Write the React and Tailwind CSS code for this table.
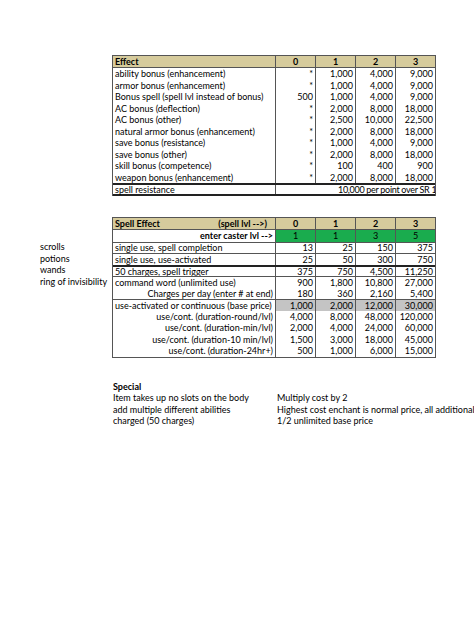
import React from "react";

// first table: magic item base prices by bonus
const effects = [
  ["ability bonus (enhancement)", "*", "1,000", "4,000", "9,000"],
  ["armor bonus (enhancement)", "*", "1,000", "4,000", "9,000"],
  ["Bonus spell (spell lvl instead of bonus)", "500", "1,000", "4,000", "9,000"],
  ["AC bonus (deflection)", "*", "2,000", "8,000", "18,000"],
  ["AC bonus (other)", "*", "2,500", "10,000", "22,500"],
  ["natural armor bonus (enhancement)", "*", "2,000", "8,000", "18,000"],
  ["save bonus (resistance)", "*", "1,000", "4,000", "9,000"],
  ["save bonus (other)", "*", "2,000", "8,000", "18,000"],
  ["skill bonus (competence)", "*", "100", "400", "900"],
  ["weapon bonus (enhancement)", "*", "2,000", "8,000", "18,000"],
];

// second table: spell effects
const spells = [
  { side: "scrolls", label: "single use, spell completion", vals: ["13", "25", "150", "375"] },
  { side: "potions", label: "single use, use-activated", vals: ["25", "50", "300", "750"] },
  { side: "wands", label: "50 charges, spell trigger", vals: ["375", "750", "4,500", "11,250"], thick: true },
  { side: "ring of invisibility", label: "command word (unlimited use)", vals: ["900", "1,800", "10,800", "27,000"] },
  { side: "", label: "Charges per day (enter # at end)", vals: ["180", "360", "2,160", "5,400"], right: true, noline: true },
  { side: "", label: "use-activated or continuous (base price)", vals: ["1,000", "2,000", "12,000", "30,000"], gray: true },
  { side: "", label: "use/cont. (duration-round/lvl)", vals: ["4,000", "8,000", "48,000", "120,000"], right: true, noline: true },
  { side: "", label: "use/cont. (duration-min/lvl)", vals: ["2,000", "4,000", "24,000", "60,000"], right: true, noline: true },
  { side: "", label: "use/cont. (duration-10 min/lvl)", vals: ["1,500", "3,000", "18,000", "45,000"], right: true, noline: true },
  { side: "", label: "use/cont. (duration-24hr+)", vals: ["500", "1,000", "6,000", "15,000"], right: true, noline: true },
];

const font = { fontFamily: "Lato, 'Liberation Sans', sans-serif" };

const Cell = ({ center, className = "", children }) => (
  <div
    className={`flex h-full w-[40px] shrink-0 items-center border-l border-[#555] px-[2px] ${center ? "justify-center" : "justify-end"} ${className}`}
  >
    {children}
  </div>
);

const App = () => {
  return (
    <div
      className="relative h-[632px] w-[474px] overflow-hidden bg-white text-[9px] leading-none text-black"
      style={font}
    >
      <div className="pt-[55px]">
        {/* Effect table */}
        <div className="ml-[112px] w-[324px] border border-b-0 border-[#555]">
          <div className="flex h-[12px] border-b border-[#555] bg-[#d6cb9c] font-bold">
            <div className="flex w-[162px] shrink-0 items-center px-[2px]">Effect</div>
            {["0", "1", "2", "3"].map((h) => (
              <Cell key={h} center>{h}</Cell>
            ))}
          </div>
          {effects.map((r) => (
            <div key={r[0]} className="flex h-[11.5px]">
              <div className="flex w-[162px] shrink-0 items-center overflow-hidden whitespace-nowrap px-[2px]">{r[0]}</div>
              {r.slice(1).map((v, i) => (
                <Cell key={i}>{v}</Cell>
              ))}
            </div>
          ))}
          <div className="flex h-[13px] border-y-2 border-[#222]">
            <div className="flex w-[162px] shrink-0 items-center px-[2px]">spell resistance</div>
            <div className="flex h-full w-[160px] shrink-0 items-center overflow-hidden whitespace-nowrap border-l border-[#555]">
              <span className="ml-[62px] tracking-[-0.3px]">10,000 per point over SR 1</span>
            </div>
          </div>
        </div>

        {/* Spell effect table with left notes */}
        <div className="mt-[21px] flex">
          <div className="w-[112px] shrink-0 pl-[40px] pt-[24px]">
            {spells.slice(0, 4).map((s) => (
              <div key={s.side} className="flex h-[11.5px] items-center whitespace-nowrap">{s.side}</div>
            ))}
          </div>
          <div className="w-[324px] border border-[#555]">
            <div className="flex h-[12px] border-b border-[#555] bg-[#d6cb9c] font-bold">
              <div className="flex w-[162px] shrink-0 items-center justify-between px-[2px]">
                <span>Spell Effect</span>
                <span className="mr-[6px]">(spell lvl --&gt;)</span>
              </div>
              {["0", "1", "2", "3"].map((h) => (
                <Cell key={h} center>{h}</Cell>
              ))}
            </div>
            <div className="flex h-[11.5px]">
              <div className="flex w-[162px] shrink-0 items-center justify-end px-[2px] font-bold">enter caster lvl --&gt;</div>
              {["1", "1", "3", "5"].map((h, i) => (
                <Cell key={i} center className="bg-[#1aac4e]">{h}</Cell>
              ))}
            </div>
            {spells.map((s) => (
              <div
                key={s.label}
                className={`flex h-[11.5px] ${s.noline ? "" : s.thick ? "border-t-2 border-[#222]" : "border-t border-[#555]"}`}
              >
                <div
                  className={`flex w-[162px] shrink-0 items-center overflow-hidden whitespace-nowrap px-[2px] ${s.right ? "justify-end" : ""}`}
                >
                  {s.label}
                </div>
                {s.vals.map((v, i) => (
                  <Cell key={i} className={s.gray ? "bg-[#c4c4c4]" : ""}>{v}</Cell>
                ))}
              </div>
            ))}
          </div>
        </div>

        {/* Special notes */}
        <div className="mt-[23px] grid grid-cols-[164px_1fr] pl-[113px] leading-[11.5px] whitespace-nowrap">
          <div className="font-bold">Special</div>
          <div />
          <div>Item takes up no slots on the body</div>
          <div>Multiply cost by 2</div>
          <div>add multiple different abilities</div>
          <div>Highest cost enchant is normal price, all additional</div>
          <div>charged (50 charges)</div>
          <div>1/2 unlimited base price</div>
        </div>
      </div>
    </div>
  );
};

export default App;
